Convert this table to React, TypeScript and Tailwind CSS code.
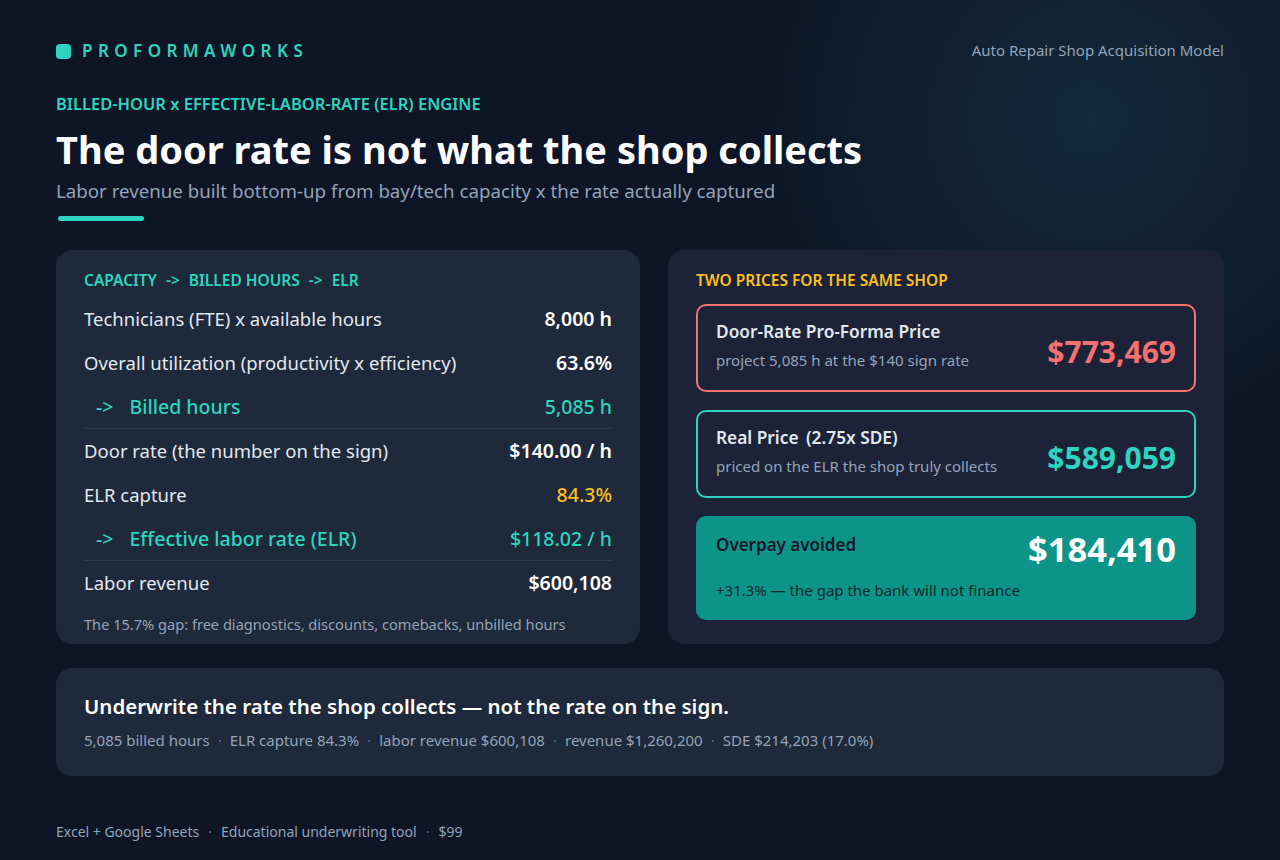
import React from "react"

const font = { fontFamily: '"Noto Sans", "Open Sans", sans-serif' }

interface Row {
  label: string
  value: string
  kind?: "result" | "warn"
  divider?: boolean
}

const rows: Row[] = [
  { label: "Technicians (FTE) x available hours", value: "8,000 h" },
  { label: "Overall utilization (productivity x efficiency)", value: "63.6%" },
  { label: "Billed hours", value: "5,085 h", kind: "result", divider: true },
  { label: "Door rate (the number on the sign)", value: "$140.00 / h" },
  { label: "ELR capture", value: "84.3%", kind: "warn" },
  { label: "Effective labor rate (ELR)", value: "$118.02 / h", kind: "result", divider: true },
  { label: "Labor revenue", value: "$600,108" },
]

function Dot({ wide }: { wide?: boolean }) {
  return <span className={`${wide ? "mx-[9px]" : "mx-[8px]"} text-slate-500`}>·</span>
}

export default function App() {
  return (
    <div
      style={font}
      className="relative w-[1280px] h-[860px] overflow-hidden bg-[#0d1526] text-white"
    >
      {/* glow */}
      <div className="pointer-events-none absolute -right-[160px] -top-[230px] w-[700px] h-[700px] rounded-full bg-[radial-gradient(circle,rgba(22,62,80,0.5)_0%,rgba(20,52,72,0.25)_45%,rgba(13,21,38,0)_70%)]" />

      <div className="relative px-14 pt-[38px]">
        {/* ===== HEADER ===== */}
        <div className="flex items-center justify-between h-[26px]">
          <div className="flex items-center">
            <div className="w-[15px] h-[15px] rounded-[4px] bg-[#2dd4bf]" />
            <span className="ml-[11px] text-[17px] font-semibold tracking-[0.32em] text-[#2dd4bf]">
              PROFORMAWORKS
            </span>
          </div>
          <span className="text-[15px] text-[#94a3b8] -mt-[2px]">Auto Repair Shop Acquisition Model</span>
        </div>

        {/* ===== TITLE ===== */}
        <div className="mt-[30px] text-[16.5px] font-semibold text-[#2dd4bf] leading-5">
          BILLED-HOUR x EFFECTIVE-LABOR-RATE (ELR) ENGINE
        </div>
        <h1 className="mt-[11px] text-[38px] font-bold leading-[48px]">
          The door rate is not what the shop collects
        </h1>
        <p className="mt-[6px] text-[18.7px] text-[#94a3b8] leading-6">
          Labor revenue built bottom-up from bay/tech capacity x the rate actually captured
        </p>
        <div className="mt-[13px] ml-[2px] w-[86px] h-[5px] rounded-full bg-[#2dd4bf]" />

        {/* ===== CARDS ===== */}
        <div className="mt-[29px] flex gap-[28px]">
          <div className="w-[584px] h-[394px] rounded-2xl bg-[#1e293b] px-7 pt-[20px]">
            <div className="text-[15.5px] font-semibold text-[#2dd4bf] leading-5">
              CAPACITY <span className="mx-[5px]">-&gt;</span> BILLED HOURS{" "}
              <span className="mx-[5px]">-&gt;</span> ELR
            </div>
            <div className="mt-[7px]">
              {rows.map((r) => (
                <div
                  key={r.label}
                  className={`flex items-center justify-between h-[44px] ${
                    r.divider ? "border-b border-[#2c3a4f]" : ""
                  }`}
                >
                  {r.kind === "result" ? (
                    <span className="text-[19.5px] text-[#2dd4bf] font-medium">
                      <span className="ml-[12px] mr-[16px]">-&gt;</span>
                      {r.label}
                    </span>
                  ) : (
                    <span className="text-[18.5px] text-[#e2e8f0]">{r.label}</span>
                  )}
                  <span
                    className={`text-[19.5px] ${
                      r.kind === "result"
                        ? "text-[#2dd4bf] font-medium"
                        : r.kind === "warn"
                          ? "text-[#fbbf24] font-medium"
                          : "text-white font-semibold"
                    }`}
                  >
                    {r.value}
                  </span>
                </div>
              ))}
            </div>
            <p className="mt-[9px] text-[14.6px] text-[#94a3b8]">
              The 15.7% gap: free diagnostics, discounts, comebacks, unbilled hours
            </p>
          </div>

          <div className="w-[556px] h-[394px] rounded-2xl bg-[#1c2338] px-7 pt-[20px]">
            <div className="text-[15.5px] font-semibold text-[#fbbf24] leading-5">
              TWO PRICES FOR THE SAME SHOP
            </div>
            <div className="mt-[14px] flex flex-col gap-[18px]">
              <div className="h-[88px] rounded-[10px] border-2 border-[#f87171] flex items-center justify-between px-[18px]">
                <div className="-mt-[4px]">
                  <div className="text-[17.3px] font-semibold text-[#e2e8f0] leading-6">
                    Door-Rate Pro-Forma Price
                  </div>
                  <div className="mt-[5px] text-[15px] text-[#94a3b8]">
                    project 5,085 h at the $140 sign rate
                  </div>
                </div>
                <div className="mt-[6px] text-[30px] font-bold text-[#f87171]">$773,469</div>
              </div>
              <div className="h-[88px] rounded-[10px] border-2 border-[#2dd4bf] flex items-center justify-between px-[18px]">
                <div className="-mt-[4px]">
                  <div className="text-[17.3px] font-semibold text-[#e2e8f0] leading-6">
                    Real Price <span className="ml-[3px]">(2.75x SDE)</span>
                  </div>
                  <div className="mt-[5px] text-[15px] text-[#94a3b8]">
                    priced on the ELR the shop truly collects
                  </div>
                </div>
                <div className="mt-[6px] text-[30px] font-bold text-[#2dd4bf]">$589,059</div>
              </div>
              <div className="h-[104px] rounded-[10px] bg-[#0d9488] px-5 pt-[13px]">
                <div className="flex items-start justify-between">
                  <div className="mt-[3px] text-[17px] font-semibold text-[#0f172a]">Overpay avoided</div>
                  <div className="-mt-[1px] text-[34.5px] font-bold leading-[42px] text-white">$184,410</div>
                </div>
                <div className="mt-[9px] text-[15px] text-[#0f2a2a]">
                  +31.3% — the gap the bank will not finance
                </div>
              </div>
            </div>
          </div>
        </div>

        {/* ===== BANNER ===== */}
        <div className="mt-[24px] h-[108px] rounded-2xl bg-[#1e293b] px-7 pt-[24px]">
          <div className="text-[20.5px] font-semibold leading-7">
            Underwrite the rate the shop collects — not the rate on the sign.
          </div>
          <div className="mt-[9px] text-[15px] text-[#94a3b8]">
            5,085 billed hours
            <Dot />
            ELR capture 84.3%
            <Dot />
            labor revenue $600,108
            <Dot />
            revenue $1,260,200
            <Dot />
            SDE $214,203 (17.0%)
          </div>
        </div>

        {/* ===== FOOTER ===== */}
        <div className="mt-[45px] text-[14px] text-[#94a3b8]">
          Excel + Google Sheets
          <Dot wide />
          Educational underwriting tool
          <Dot wide />
          $99
        </div>
      </div>
    </div>
  )
}
